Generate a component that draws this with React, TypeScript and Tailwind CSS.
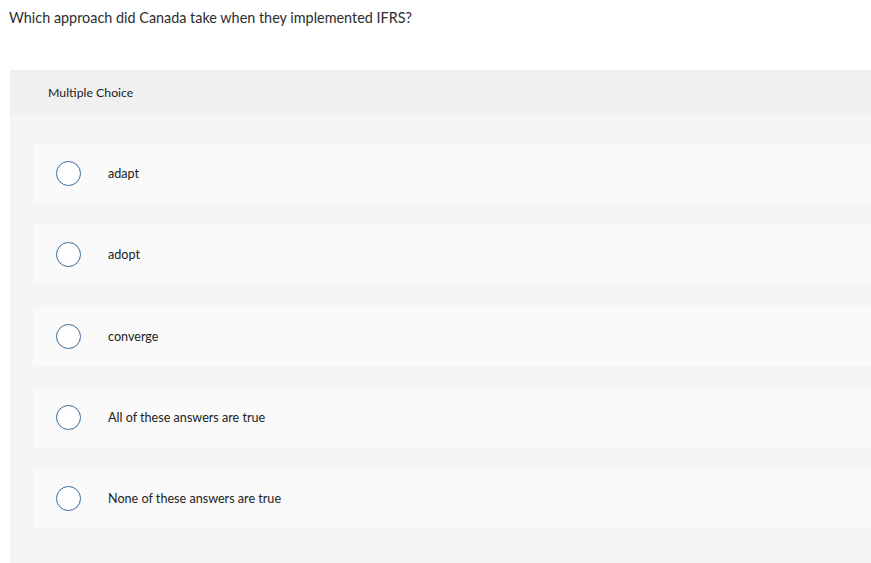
import React from "react";

const options = [
  "adapt",
  "adopt",
  "converge",
  "All of these answers are true",
  "None of these answers are true",
];

export default function App() {
  return (
    <div className="w-[871px] h-[563px] overflow-hidden bg-white text-[#333]" style={{ fontFamily: "Lato, 'Open Sans', sans-serif" }}>
      <div className="pl-[9px] pt-[9px] h-[70px] text-[14.4px] leading-[17px] text-[#2d2d2d]">
        Which approach did Canada take when they implemented IFRS?
      </div>
      <div className="ml-[10px] bg-[#f5f5f5] h-[493px]">
        <div className="h-[45px] bg-[#f0f0f0] flex items-center pl-[38px] pt-[2px] text-[12.3px] text-[#222]">
          Multiple Choice
        </div>
        <div className="pt-[29px] pl-[23px] flex flex-col gap-[22.25px]">
          {options.map((o) => (
            <div key={o} className="h-[59px] bg-[#fafafa] rounded-l-[2px] flex items-center">
              <div className="ml-[23px] w-[25px] h-[25px] rounded-full border-[1.5px] border-[#3a6b9c] bg-white" />
              <div className="ml-[27px] pt-[2px] text-[12.6px] text-[#222]">{o}</div>
            </div>
          ))}
        </div>
      </div>
    </div>
  );
}
